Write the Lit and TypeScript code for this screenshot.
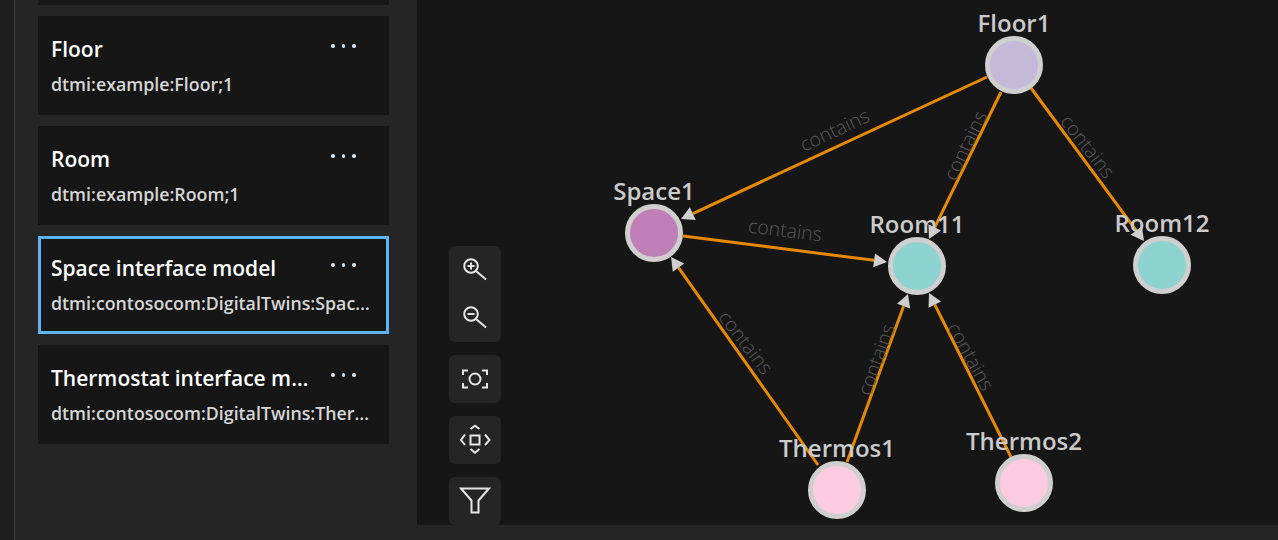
import { LitElement, css, html, svg } from "lit";
import { customElement } from "lit/decorators.js";

type Model = { name: string; id: string; selected?: boolean };

// the list is scrolled: only the foot of the first card is in view
const MODELS: Model[] = [
  { name: "Floor", id: "dtmi:example:Floor;1" },
  { name: "Room", id: "dtmi:example:Room;1" },
  { name: "Space interface model", id: "dtmi:contosocom:DigitalTwins:Space:1", selected: true },
  { name: "Thermostat interface model", id: "dtmi:contosocom:DigitalTwins:Thermostat:1" },
];

const NODES = [
  { label: "Floor1", x: 1014, y: 65, ly: 32, fill: "#c5b9d9" },
  { label: "Space1", x: 654, y: 233, ly: 200, fill: "#c07fb7" },
  { label: "Room11", x: 917, y: 266, ly: 233, fill: "#8dd3cf" },
  { label: "Room12", x: 1162, y: 265, ly: 232, fill: "#8dd3cf" },
  { label: "Thermos1", x: 837, y: 490, ly: 457, fill: "#fdcbdf" },
  { label: "Thermos2", x: 1024, y: 483, ly: 450, fill: "#fdcbdf" },
];

// from, arrow tip
const EDGES = [
  [987, 77, 681, 219],
  [683, 236, 887, 262],
  [1001, 92, 929, 239],
  [1031, 88, 1144, 241],
  [818, 465, 671, 257],
  [847, 462, 908, 294],
  [1011, 457, 929, 293],
];

const EDGE_LABELS = [
  [835, 131, -25],
  [785, 231, 7],
  [966, 146, -64],
  [1087, 147, 52],
  [745, 343, 52],
  [877, 360, -70],
  [970, 357, 61],
];

const ARROW_LEN = 13;
const ARROW_HALF = 7;

function edgeBase([x1, y1, x2, y2]: number[]) {
  const len = Math.hypot(x2 - x1, y2 - y1);
  const ux = (x2 - x1) / len;
  const uy = (y2 - y1) / len;
  return { ux, uy, bx: x2 - ux * ARROW_LEN, by: y2 - uy * ARROW_LEN };
}

function edgeLine(e: number[]) {
  const { bx, by } = edgeBase(e);
  return svg`<line x1=${e[0]} y1=${e[1]} x2=${bx} y2=${by} stroke="#e88a00" stroke-width="3"></line>`;
}

function edgeArrow(e: number[]) {
  const { ux, uy, bx, by } = edgeBase(e);
  const pts = `${e[2]},${e[3]} ${bx - uy * ARROW_HALF},${by + ux * ARROW_HALF} ${bx + uy * ARROW_HALF},${by - ux * ARROW_HALF}`;
  return svg`<polygon points=${pts} fill="#cfcfcf"></polygon>`;
}

@customElement("app-root")
export class AppRoot extends LitElement {
  static styles = css`
    :host {
      display: flex;
      width: 1278px;
      height: 540px;
      overflow: hidden;
      background: #252525;
      font-family: "Open Sans", "Noto Sans", sans-serif;
    }
    .rail {
      width: 14px;
      background: #1f1f1f;
      border-right: 1px solid #3c3c3c;
    }
    .panel {
      width: 402px;
      overflow: hidden;
      padding: 0 28px 0 23px;
      box-sizing: border-box;
    }
    .list {
      display: flex;
      flex-direction: column;
      gap: 11px;
      margin-top: -94px;
    }
    .stub {
      height: 99px;
      background: #161616;
    }
    .card {
      box-sizing: border-box;
      height: 99px;
      padding: 18px 13px 0;
      background: #161616;
      display: grid;
      grid-template-columns: 259px 1fr;
      column-gap: 21px;
      grid-template-rows: 35px 30px;
    }
    .card.selected {
      height: 98px;
      border: 3px solid #5db4f5;
      padding: 14px 10px 0;
    }
    .name {
      font-size: 21px;
      line-height: 30px;
      font-weight: 600;
      color: #fff;
      white-space: nowrap;
      overflow: hidden;
      text-overflow: ellipsis;
    }
    .more {
      display: flex;
      gap: 7px;
      align-items: flex-start;
      padding-top: 10px;
    }
    .more i {
      width: 3.5px;
      height: 3.5px;
      border-radius: 50%;
      background: #cfe0ee;
    }
    .id {
      grid-column: 1 / 3;
      font-size: 17.8px;
      line-height: 30px;
      font-weight: 600;
      color: #d6d6d6;
      white-space: nowrap;
      overflow: hidden;
      text-overflow: ellipsis;
    }
    .right {
      flex: 1;
      display: flex;
      flex-direction: column;
    }
    .graph {
      position: relative;
      height: 525px;
      overflow: hidden;
      background: #161616;
    }
    .graph > svg {
      display: block;
    }
    .node-label {
      font-size: 24px;
      font-weight: 600;
      fill: #cbcbcb;
      text-anchor: middle;
    }
    .edge-label {
      font-size: 19.5px;
      font-weight: 300;
      fill: #5a5a5a;
      text-anchor: middle;
    }
    .tools {
      position: absolute;
      left: 32px;
      top: 246px;
      display: flex;
      flex-direction: column;
      gap: 13px;
    }
    .group {
      width: 52px;
      background: #252525;
      border-radius: 6px;
      display: flex;
      flex-direction: column;
    }
    .group button {
      all: unset;
      width: 52px;
      height: 48px;
      display: flex;
      align-items: center;
      justify-content: center;
    }
    .group svg {
      fill: none;
      stroke: #e6e6e6;
      stroke-width: 2;
    }
  `;

  private renderCard(m: Model) {
    return html`
      <div class="card ${m.selected ? "selected" : ""}">
        <div class="name">${m.name}</div>
        <div class="more"><i></i><i></i><i></i></div>
        <div class="id">${m.id}</div>
      </div>
    `;
  }

  private renderTools() {
    return html`
      <div class="tools">
        <div class="group">
          <button>
            <svg width="26" height="26" viewBox="0 0 26 26">
              <circle cx="9" cy="9" r="6.8"></circle>
              <path d="M14 14 24 22.5M5.5 9h7M9 5.5v7"></path>
            </svg>
          </button>
          <button>
            <svg width="26" height="26" viewBox="0 0 26 26">
              <circle cx="9" cy="9" r="6.8"></circle>
              <path d="M14 14 24 22.5M5.5 9h7"></path>
            </svg>
          </button>
        </div>
        <div class="group">
          <button>
            <svg width="28" height="22" viewBox="0 0 28 22">
              <circle cx="14" cy="11" r="5.5"></circle>
              <path d="M2 7V2.5h5M21 2.5h5V7M2 15v4.5h5M21 19.5h5V15"></path>
            </svg>
          </button>
        </div>
        <div class="group">
          <button>
            <svg width="32" height="32" viewBox="0 0 32 32">
              <rect x="11.5" y="11.5" width="9" height="9"></rect>
              <path d="M11.5 5 16 1.7 20.5 5M11.5 25 16 28.7 20.5 25M6 10.5 2 16l4 5M26 10.5l4.5 5.5-4.5 5"></path>
            </svg>
          </button>
        </div>
        <div class="group">
          <button>
            <svg width="32" height="28" viewBox="0 0 32 28">
              <path d="M2 1.5h28L19.5 13.5v12h-7v-12z"></path>
            </svg>
          </button>
        </div>
      </div>
    `;
  }

  render() {
    return html`
      <div class="rail"></div>
      <div class="panel">
        <div class="list">
          <div class="stub"></div>
          ${MODELS.map((m) => this.renderCard(m))}
        </div>
      </div>
      <div class="right">
        <div class="graph">
          <svg width="861" height="525" viewBox="417 0 861 525">
            ${EDGES.map((e) => edgeLine(e))}
            ${NODES.map(
              (n) => svg`<text class="node-label" x=${n.x} y=${n.ly}>${n.label}</text>`,
            )}
            ${EDGE_LABELS.map(
              ([x, y, a]) =>
                svg`<text class="edge-label" transform="translate(${x} ${y}) rotate(${a})" y="6">contains</text>`,
            )}
            ${EDGES.map((e) => edgeArrow(e))}
            ${NODES.map(
              (n) =>
                svg`<circle cx=${n.x} cy=${n.y} r="26.5" fill=${n.fill} stroke="#cfcfcf" stroke-width="5"></circle>`,
            )}
          </svg>
          ${this.renderTools()}
        </div>
      </div>
    `;
  }
}
